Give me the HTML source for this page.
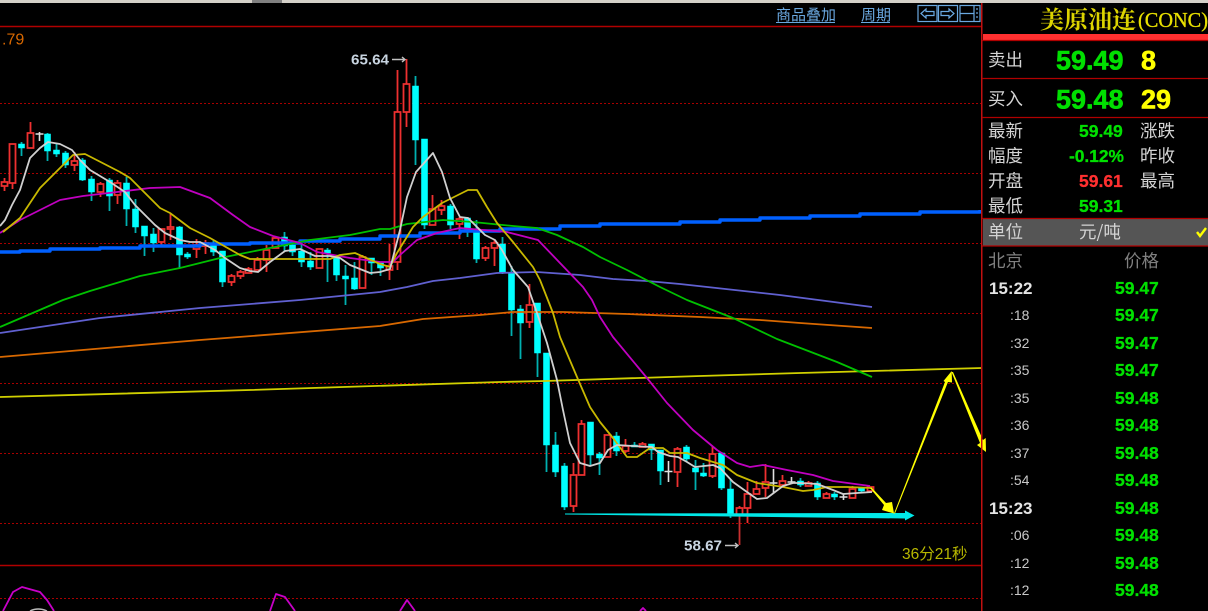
<!DOCTYPE html>
<html><head><meta charset="utf-8"><style>
html,body{margin:0;padding:0;background:#000;width:1208px;height:611px;overflow:hidden}
svg{display:block}
text{font-family:"Liberation Sans","WenQuanYi Zen Hei","Noto Sans CJK SC",sans-serif}
.l{font-size:17.5px;fill:#d4d4d4;font-family:"WenQuanYi Zen Hei","Noto Sans CJK SC",sans-serif}
.v{font-size:17.5px;font-weight:bold;fill:#00e000;stroke:#00e000;stroke-width:.3}
.p{font-size:17.5px;font-weight:bold;fill:#00e000;stroke:#00e000;stroke-width:.3}
.t{font-size:14px;fill:#c8c8c8}
.big{font-size:27px;font-weight:bold;stroke-width:.6}
.m{fill:none;stroke-width:1.8;stroke-linejoin:round}
</style></head><body>
<svg width="1208" height="611" viewBox="0 0 1208 611" xmlns="http://www.w3.org/2000/svg">
<rect width="1208" height="611" fill="#000"/>
<rect width="1208" height="3" fill="#d4d0c8"/>
<rect x="252" width="30" height="3" fill="#808080"/>
<g stroke="#a80000" stroke-width="1" stroke-dasharray="2 2">
<path d="M0 103.5H981M0 173.5H981M0 243.5H981M0 313.5H981M0 383.5H981M0 453.5H981M0 523.5H981M0 598.5H981"/>
</g>
<path d="M0 26.5H981M0 565.5H981" stroke="#b00000" stroke-width="1.4"/>

<!-- sub chart -->
<path class="m" stroke="#c800c8" d="M3 611L13 592L22 587L40 592L47 600L54 611M270 611L276 594L285 597L295 611M400 611L407 600L415 611M640 611L643 608L646 611"/>
<path d="M30 611Q38 607 47 611" stroke="#bbb" fill="none" stroke-width="1.5"/>

<!-- candles -->
<g transform="translate(0.5,0)">
<path fill="none" stroke="#00b0b0" stroke-width="1.8" d="M21 142V156M47 133V161M56 144V157M65 151V168M82 158V181M91 176V201M109 178V211M126 177V226M135 199V233M144 226V256M153 228V252M179 226V268M187 252V259M213 240V256M222 251V287M284 232V252M292 242V256M301 243V267M310 252V270M327 248V282M336 255V281M345 265V305M354 262V290M371 258V275M380 262V276M415 76V165M424 139V229M450 204V229M467 217V237M476 220V263M502 237V274M511 266V336M520 305V359M537 303V377M546 353V472M555 432V477M564 463V510M590 422V465M599 452V475M616 432V456M634 442V447M651 444V460M660 450V485M686 445V462M695 460V490M703 463V477M721 452V490M730 480V518M800 478V487M817 481V500M834 492V500M861 487V493"/>
<path fill="#00ffff" stroke="#00ffff" stroke-width=".6" d="M18 144h6V148h-6zM44 134h6V151h-6zM53 150h6V154h-6zM62 153h6V165h-6zM79 160h6V180h-6zM88 179h6V192h-6zM106 180h6V196h-6zM123 183h6V209h-6zM132 209h6V227h-6zM141 226h6V236h-6zM150 234h6V243h-6zM176 227h6V255h-6zM184 254h6V257h-6zM210 243h6V252h-6zM219 251h6V282h-6zM281 237h6V246h-6zM289 245h6V252h-6zM298 251h6V262h-6zM307 261h6V267h-6zM324 250h6V253h-6zM333 256h6V275h-6zM342 276h6V279h-6zM351 278h6V289h-6zM368 258h6V263h-6zM377 263h6V268h-6zM412 86h6V140h-6zM421 139h6V225h-6zM447 206h6V225h-6zM464 218h6V229h-6zM473 230h6V259h-6zM499 244h6V272h-6zM508 273h6V310h-6zM517 309h6V323h-6zM534 303h6V353h-6zM543 353h6V445h-6zM552 445h6V472h-6zM561 466h6V507h-6zM587 422h6V455h-6zM596 454h6V458h-6zM613 436h6V451h-6zM631 445h6V447h-6zM648 444h6V450h-6zM657 450h6V471h-6zM683 447h6V459h-6zM692 468h6V472h-6zM700 473h6V476h-6zM718 453h6V488h-6zM727 489h6V515h-6zM797 481h6V485h-6zM814 483h6V497h-6zM831 494h6V497h-6zM858 488h6V491h-6z"/>
<path fill="#000" stroke="#ee3030" stroke-width="1.8" d="M4 178V182M4 186V191M1 182h6v4h-6zM12 183V189M9 144h6v39h-6zM30 122V133M27 133h6v15h-6zM74 152V161M74 165V171M71 161h6v4h-6zM100 182V184M100 192V197M97 184h6v8h-6zM117 180V183M117 195V204M114 183h6v12h-6zM161 242V245M158 229h6v13h-6zM170 214V227M170 229V240M167 227h6v2h-6zM196 239V245M196 249V258M193 245h6v4h-6zM205 240V243M205 246V254M202 243h6v3h-6zM231 274V276M231 282V286M228 276h6v6h-6zM240 270V272M240 276V279M237 272h6v4h-6zM248 267V269M245 269h6v4h-6zM257 257V260M254 260h6v10h-6zM266 245V250M266 260V272M263 250h6v10h-6zM275 236V238M272 238h6v10h-6zM316 249h6v19h-6zM362 255V257M359 257h6v31h-6zM389 244V266M389 270V280M386 266h6v4h-6zM397 70V112M397 262V270M394 112h6v150h-6zM406 59V84M406 112V127M403 84h6v28h-6zM432 195V209M429 209h6v16h-6zM441 200V206M441 210V215M438 206h6v4h-6zM459 217V219M459 224V239M456 219h6v5h-6zM485 246V248M485 258V261M482 248h6v10h-6zM494 240V243M494 248V266M491 243h6v5h-6zM529 284V305M529 322V328M526 305h6v17h-6zM573 463V475M573 506V512M570 475h6v31h-6zM581 420V424M578 424h6v51h-6zM604 435h6v22h-6zM625 439V446M625 451V453M622 446h6v5h-6zM642 442V444M639 444h6v3h-6zM677 447V449M677 472V487M674 449h6v23h-6zM712 446V454M712 476V478M709 454h6v22h-6zM739 506V508M736 508h6v7h-6zM747 482V494M747 508V523M744 494h6v14h-6zM756 481V489M753 489h6v5h-6zM765 464V482M765 488V497M762 482h6v6h-6zM782 475V481M779 481h6v4h-6zM808 481V483M805 483h6v3h-6zM826 492V494M823 494h6v4h-6zM852 486V489M849 489h6v9h-6zM867 487h6v4h-6z"/>
<path d="M739 515V545" stroke="#c83030" stroke-width="1.8"/>
<path stroke="#e0e0e0" stroke-width="1.6" fill="none" d="M39 132V141M35 134H43M668 461V482M664 471.5H672M773 469V493M769 483H777M791 477V483M787 482H795M843 494V500M839 497H847"/>
</g>

<!-- moving averages -->
<path class="m" style="stroke-width:3.4" stroke="#0060ff" d="M0 252H20V251H50V249H100V248H140V246H200V244H250V243H300V241H340V239H380V236H420V233H460V231H500V229H560V226H600V224H680V222H720V220H760V218H810V216H860V214H920V212H980V210"/>
<path class="m" stroke="#6060d0" d="M0 333L100 318L200 308L300 300L380 292L407 287L433 281L460 278L497 273L537 272L580 275L613 279L647 281L680 284L780 295L872 307"/>
<path class="m" stroke="#d86800" d="M0 357L200 340L380 326L423 319L480 315L513 312L563 312L627 314L700 317L760 320L800 323L872 328"/>
<path class="m" stroke="#d0d000" d="M0 397L250 390L500 382L545 381L700 376L800 373L982 368"/>
<path class="m" stroke="#00c000" d="M0 327L63 300L90 291L140 276L180 268L220 258L260 250L310 240L350 235L380 229L390 229L407 224L443 220L473 222L513 226L537 228L557 235L583 247L600 257L627 270L660 287L687 300L733 318L777 339L837 362L872 377"/>
<path class="m" stroke="#c000c0" d="M0 233L20 220L60 200L83 196L117 192L150 188L180 187L210 198L233 215L250 227L273 236L300 243L317 252L350 258L380 262L393 262L400 255L417 240L437 233L460 228L507 232L538 240L560 263L583 287L592 300L600 317L613 337L647 378L667 403L693 430L717 450L737 463L750 467L763 465L787 470L813 475L833 481L870 486"/>
<path class="m" stroke="#c8b800" d="M3 232L20 218L40 188L73 155L85 154L120 172L130 178L160 208L170 213L190 228L210 238L240 255L250 259L280 259L330 259L340 255L355 253L380 264L390 267L397 253L413 227L423 217L442 203L468 190L477 190L487 207L497 223L513 242L533 267L540 280L553 313L560 337L577 377L590 407L600 422L613 438L627 457L637 457L650 448L663 448L670 453L687 453L700 458L723 465L737 475L757 483L783 487L803 491L813 490L827 487L847 487L872 488"/>
<path class="m" stroke="#d0d0d0" d="M0 226L5 220L12 205L20 190L30 158L40 148L48 142L60 144L72 150L80 160L90 170L100 176L110 182L125 192L135 205L145 215L155 225L165 233L180 240L190 242L200 242L215 250L225 258L240 268L250 271L258 272L270 262L285 251L300 249L315 256L330 256L340 258L350 265L370 273L380 272L390 269L400 230L407 197L416 172L433 153L442 172L450 198L460 217L468 218L477 227L485 235L495 240L502 250L513 270L528 287L537 313L547 343L557 380L563 410L570 443L580 463L590 466L600 463L608 450L617 445L633 446L652 447L658 452L670 456L678 457L687 462L695 467L713 465L720 468L733 482L747 492L757 499L767 498L783 486L793 483L800 483L817 484L833 490L843 494L857 493L872 492"/>

<!-- drawn annotations -->
<polygon fill="#00e8e8" points="565,513.5 905,513 905,510.5 914.5,515.5 905,520.5 905,518.5 565,514.5"/>
<polygon fill="#ffff00" points="870,488 872,488 886,503 892,502 894,513.5 882,510 884,505"/>
<polygon fill="#ffff00" points="894,513.5 895,513.5 948,382 952,382.5 951.7,371 943.5,381 945,382"/>
<polygon fill="#ffff00" points="951.5,372 953,372 983,440 985.7,438 986,452 977,445 980,443"/>

<!-- labels on chart -->
<text x="2" y="44.5" font-size="16" fill="#d86800">.79</text>
<text x="351" y="64.5" font-size="15" font-weight="bold" fill="#c8d4e0" textLength="38" lengthAdjust="spacingAndGlyphs">65.64</text>
<path d="M392 59.5H405M402 57L405 59.5L402 62" stroke="#c0c0c0" fill="none" stroke-width="1.4"/>
<text x="684" y="550.5" font-size="15" font-weight="bold" fill="#c8d4e0" textLength="38" lengthAdjust="spacingAndGlyphs">58.67</text>
<path d="M725 545.5H738M735 543L738 545.5L735 548" stroke="#c0c0c0" fill="none" stroke-width="1.4"/>
<text x="902" y="559" font-size="15.5" fill="#b8b800">36分21秒</text>

<!-- top toolbar -->
<text x="776" y="20" font-size="15" fill="#6aa8e0" style="font-family:'WenQuanYi Zen Hei','Noto Sans CJK SC',sans-serif">商品叠加</text>
<text x="861" y="20" font-size="15" fill="#6aa8e0" style="font-family:'WenQuanYi Zen Hei','Noto Sans CJK SC',sans-serif">周期</text>
<path d="M776 22.5H835M861 22.5H890" stroke="#6aa8e0" stroke-width="1"/>
<g fill="none" stroke="#6aa8e0" stroke-width="1.2">
<rect x="918" y="5.5" width="19" height="16"/><rect x="938.5" y="5.5" width="19" height="16"/><rect x="960" y="5.5" width="20" height="16"/>
<path d="M921 13.5L926 9V11.5H934V15.5H926V18Z"/>
<path d="M954 13.5L949 9V11.5H941V15.5H949V18Z"/>
<path d="M960 13.5H974M974 5.5V21.5M977 8V10M977 12V14M977 16V18"/>
</g>

<!-- right panel -->
<rect x="981" y="3" width="1.5" height="608" fill="#c01010"/>
<rect x="983" y="34" width="225" height="6" fill="#ff3030"/>
<path d="M982 40.5H1208M982 78.5H1208M982 117.5H1208" stroke="#b00000" stroke-width="1.3"/>
<text x="1040" y="28" font-size="24" font-weight="bold" fill="#dcd400" style="font-family:'Noto Serif CJK SC',serif">美原油连</text>
<text x="1138" y="27" font-size="21" fill="#e8e000" stroke="#e8e000" stroke-width=".3" style="font-family:'Liberation Serif',serif" textLength="70" lengthAdjust="spacingAndGlyphs">(CONC)</text>

<text class="l" x="988" y="66">卖出</text>
<text class="big" x="1056" y="69.5" fill="#00e000" stroke="#00e000">59.49</text>
<text class="big" x="1141" y="69.5" fill="#ffff00" stroke="#ffff00">8</text>
<text class="l" x="988" y="105">买入</text>
<text class="big" x="1056" y="108.5" fill="#00e000" stroke="#00e000">59.48</text>
<text class="big" x="1141" y="108.5" fill="#ffff00" stroke="#ffff00">29</text>

<text class="l" x="988" y="137">最新</text><text class="v" x="1079" y="137">59.49</text><text class="l" x="1140" y="137">涨跌</text>
<text class="l" x="988" y="162">幅度</text><text class="v" x="1069" y="162" textLength="55" lengthAdjust="spacingAndGlyphs">-0.12%</text><text class="l" x="1140" y="162">昨收</text>
<text class="l" x="988" y="187">开盘</text><text class="v" x="1079" y="187" style="fill:#ff3030;stroke:#ff3030">59.61</text><text class="l" x="1140" y="187">最高</text>
<text class="l" x="988" y="212">最低</text><text class="v" x="1079" y="212">59.31</text>

<rect x="983" y="219" width="225" height="27" fill="#555"/>
<path d="M982 218.5H1208M982 246H1208" stroke="#b00000" stroke-width="1.3"/>
<text class="l" x="988" y="238">单位</text>
<text class="l" x="1079" y="238">元/吨</text>
<path d="M1197 232L1200 236L1206 228" stroke="#ffff00" stroke-width="2.4" fill="none"/>

<text class="l" x="988" y="267" style="fill:#808080">北京</text>
<text class="l" x="1124" y="267" style="fill:#808080">价格</text>

<text x="989" y="294" font-size="17" font-weight="bold" fill="#e4e4e4">15:22</text>
<text class="t" x="1010" y="320">:18</text>
<text class="t" x="1010" y="348">:32</text>
<text class="t" x="1010" y="375">:35</text>
<text class="t" x="1010" y="403">:35</text>
<text class="t" x="1010" y="430">:36</text>
<text class="t" x="1010" y="458">:37</text>
<text class="t" x="1010" y="485">:54</text>
<text x="989" y="514" font-size="17" font-weight="bold" fill="#e4e4e4">15:23</text>
<text class="t" x="1010" y="540">:06</text>
<text class="t" x="1010" y="568">:12</text>
<text class="t" x="1010" y="595">:12</text>

<text class="p" x="1115" y="294">59.47</text>
<text class="p" x="1115" y="321">59.47</text>
<text class="p" x="1115" y="349">59.47</text>
<text class="p" x="1115" y="376">59.47</text>
<text class="p" x="1115" y="404">59.48</text>
<text class="p" x="1115" y="431">59.48</text>
<text class="p" x="1115" y="459">59.48</text>
<text class="p" x="1115" y="486">59.48</text>
<text class="p" x="1115" y="514">59.48</text>
<text class="p" x="1115" y="541">59.48</text>
<text class="p" x="1115" y="569">59.48</text>
<text class="p" x="1115" y="596">59.48</text>
</svg>
</body></html>
